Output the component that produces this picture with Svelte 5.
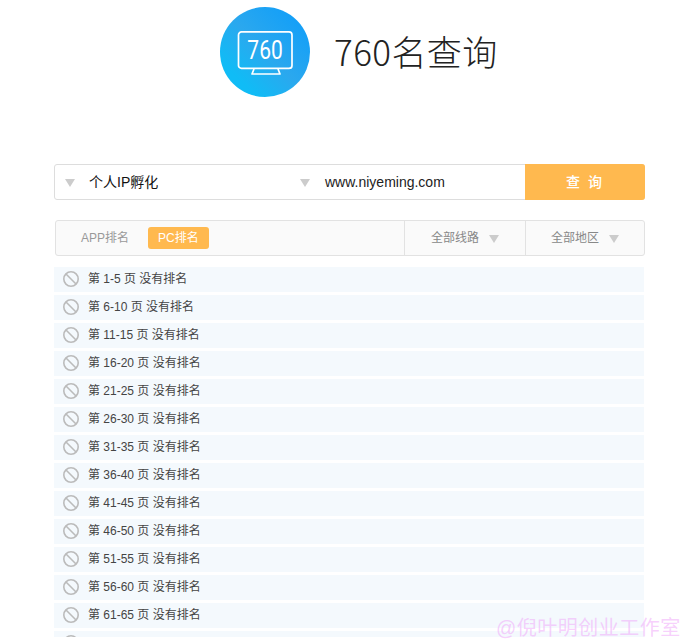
<script>
    const pages = []
    for (let i = 0; i < 13; i++) {
        pages.push(`${i * 5 + 1}-${i * 5 + 5}`)
    }
</script>

<div class="page">
    <header class="head">
        <div class="logo">
            <svg width="56" height="44" viewBox="0 0 56 44" fill="none" stroke="#fff" stroke-width="1.7">
                <rect x="1.5" y="0.9" width="53.5" height="36.5" rx="3" />
                <path d="M17 38 L15 43 H43 L41 38" stroke-linejoin="round" />
            </svg>
            <span class="logo-num">760</span>
        </div>
        <h1>760名查询</h1>
    </header>

    <div class="search">
        <div class="pick first">
            <i class="tri"></i>
            <span>个人IP孵化</span>
        </div>
        <div class="pick second">
            <i class="tri"></i>
            <span>www.niyeming.com</span>
        </div>
        <button class="go">查 询</button>
    </div>

    <div class="tabs">
        <div class="tab-left">
            <span class="tab">APP排名</span>
            <span class="tab on">PC排名</span>
        </div>
        <div class="filter line"><span>全部线路</span><i class="tri"></i></div>
        <div class="filter area"><span>全部地区</span><i class="tri"></i></div>
    </div>

    <ul class="rows">
        {#each pages as p}
            <li>
                <svg width="18" height="18" viewBox="0 0 18 18" fill="none" stroke="#bbb" stroke-width="1.6">
                    <circle cx="9" cy="9" r="7.2" />
                    <path d="M4 4 L14 14" />
                </svg>
                <span>第 {p} 页 没有排名</span>
            </li>
        {/each}
        <li>
            <svg width="18" height="18" viewBox="0 0 18 18" fill="none" stroke="#bbb" stroke-width="1.6">
                <circle cx="9" cy="9" r="7.2" />
            </svg>
        </li>
    </ul>

    <div class="mark">@倪叶明创业工作室</div>
</div>

<style>
    :global(html), :global(body) {
        margin: 0;
        height: 100%;
        overflow: hidden;
        background: #fff;
    }
    .page {
        position: relative;
        height: 644px;
        font-family: "Liberation Sans", "Noto Sans CJK SC", sans-serif;
        font-size: 12px;
        color: #444;
    }
    .head {
        display: flex;
        align-items: center;
        padding: 7px 0 0 220px;
        height: 90px;
    }
    .logo {
        position: relative;
        width: 90px;
        height: 90px;
        border-radius: 50%;
        background-image: linear-gradient(225deg, #0b9cfb 0%, #2ba8ee 50%, #10bcf6 80%);
        display: flex;
        align-items: center;
        justify-content: center;
    }
    .logo svg {
        margin-top: 1px;
    }
    .logo-num {
        position: absolute;
        left: 24px;
        top: 28px;
        width: 42px;
        text-align: center;
        color: #fff;
        font-family: Roboto, sans-serif;
        font-size: 25px;
        line-height: 32px;
        transform: scaleX(0.84);
    }
    h1 {
        margin: -2px 0 0 24px;
        font-family: "Noto Sans CJK SC", sans-serif;
        font-weight: 300;
        font-size: 35px;
        line-height: 50px;
        color: #222;
        letter-spacing: 0.4px;
    }
    .search {
        display: flex;
        margin: 67px 45px 0 54px;
        height: 36px;
        border: 1px solid #ddd;
        border-radius: 3px;
        box-sizing: border-box;
    }
    .pick {
        display: flex;
        align-items: center;
        font-size: 14px;
        line-height: 34px;
        color: #111;
    }
    .pick.first {
        width: 235px;
        padding-left: 10px;
    }
    .pick.first span {
        margin-left: 14px;
    }
    .pick.second {
        width: 225px;
    }
    .pick.second span {
        margin-left: 15px;
        color: #222;
    }
    .tri {
        display: inline-block;
        width: 0;
        height: 0;
        margin-top: 2px;
        border-left: 5px solid transparent;
        border-right: 5px solid transparent;
        border-top: 8px solid #ccc;
    }
    .go {
        flex: 1;
        margin: -1px -1px -1px 0;
        border: 0;
        padding: 0;
        background: #ffb94f;
        color: #fff;
        font: inherit;
        font-size: 14px;
        line-height: 34px;
        font-weight: 500;
        letter-spacing: 2px;
        border-radius: 0 3px 3px 0;
    }
    .tabs {
        display: flex;
        margin: 20px 45px 0 55px;
        height: 36px;
        box-sizing: border-box;
        border: 1px solid #e2e2e2;
        border-radius: 3px;
        background: #fafafa;
        color: #888;
        line-height: 22px;
    }
    .tab-left {
        flex: 1;
        display: flex;
        align-items: center;
        padding-left: 25px;
        gap: 19px;
    }
    .tab {
        color: #999;
    }
    .tab.on {
        background: #ffb94f;
        color: #fff;
        padding: 0 10px;
        border-radius: 3px;
    }
    .filter {
        display: flex;
        align-items: center;
        gap: 10px;
        border-left: 1px solid #e2e2e2;
        box-sizing: border-box;
        justify-content: center;
    }
    .filter.line { width: 121px; }
    .filter.area { width: 119px; }
    .rows {
        list-style: none;
        height: 370px;
        overflow: hidden;
        margin: 11px 46px 0 54px;
        padding: 0;
    }
    .rows li {
        display: flex;
        align-items: center;
        height: 25px;
        line-height: 25px;
        margin-bottom: 3px;
        padding-left: 8px;
        gap: 8px;
        background: #f4f9fd;
    }
    .rows svg {
        margin-top: -1px;
    }
    .mark {
        position: absolute;
        left: 496px;
        top: 619px;
        font-size: 20px;
        line-height: 18px;
        letter-spacing: 0.5px;
        color: rgba(240, 170, 250, 0.55);
        white-space: nowrap;
    }
</style>
